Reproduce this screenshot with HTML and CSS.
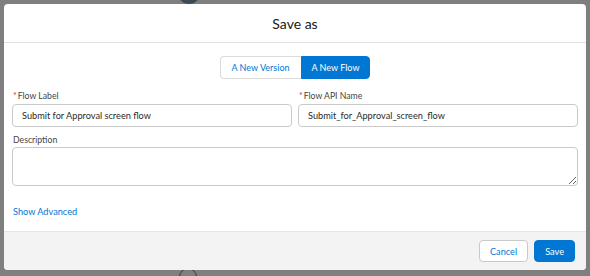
FILE: index.html
```html
<!DOCTYPE html>
<html lang="en">
<head>
    <meta charset="UTF-8">
    <meta name="viewport" content="width=device-width, initial-scale=1.0">
    <title>Save as</title>
    <link rel="stylesheet" href="styles.css">
</head>
<body>
    <div class="avatar-top"></div>
    <div class="avatar-bottom"></div>

    <div class="modal">
        <div class="modal-header">
            <h2>Save as</h2>
        </div>

        <div class="modal-body">
            <div class="toggle">
                <button type="button" class="toggle-btn">A New Version</button>
                <button type="button" class="toggle-btn active">A New Flow</button>
            </div>

            <div class="form-row">
                <div class="form-group">
                    <label for="flowLabel"><span class="required">*</span>Flow Label</label>
                    <input type="text" id="flowLabel" value="Submit for Approval screen flow">
                </div>
                <div class="form-group">
                    <label for="apiName"><span class="required">*</span>Flow API Name</label>
                    <input type="text" id="apiName" value="Submit_for_Approval_screen_flow">
                </div>
            </div>

            <div class="form-group">
                <label for="description">Description</label>
                <textarea id="description"></textarea>
            </div>

            <a href="#" class="show-advanced">Show Advanced</a>
        </div>

        <div class="modal-footer">
            <button type="button" class="cancel-btn">Cancel</button>
            <button type="button" class="save-btn">Save</button>
        </div>
    </div>
</body>
</html>
```

FILE: styles.css
```css
body {
    font-family: Lato, "Open Sans", Arial, sans-serif;
    margin: 0;
    padding: 4px;
    background-color: #7f7f7f;
    overflow: hidden;
}

/* bits of the page behind the backdrop */
.avatar-top {
    position: absolute;
    left: 178px;
    top: -18px;
    width: 22px;
    height: 22px;
    border-radius: 50%;
    background-color: #3d4a52;
}

.avatar-bottom {
    position: absolute;
    left: 179px;
    top: 268px;
    width: 16px;
    height: 16px;
    border-radius: 50%;
    border: 1px solid #3a3a3a;
}

.modal {
    position: relative;
    background-color: #fff;
    border-radius: 4px;
    height: 266px;
    display: flex;
    flex-direction: column;
    overflow: hidden;
}

.modal-header {
    height: 38px;
    border-bottom: 1px solid #e0e0e0;
    display: flex;
    align-items: center;
    justify-content: center;
}

.modal-header h2 {
    margin: 0;
    font-size: 14px;
    font-weight: normal;
    color: #181818;
}

.modal-body {
    flex: 1;
    padding: 13px 8px 0 8px;
}

.toggle {
    display: flex;
    justify-content: center;
    margin-bottom: 11px;
}

.toggle-btn {
    font-family: inherit;
    font-size: 9px;
    height: 23px;
    padding: 0 10px;
    border: 1px solid #dddbda;
    background-color: #fff;
    color: #0176d3;
    cursor: pointer;
}

.toggle-btn:first-child {
    border-radius: 4px 0 0 4px;
    border-right: none;
    padding: 0 11px;
}

.toggle-btn.active {
    background-color: #0176d3;
    border-color: #0176d3;
    color: #fff;
    border-radius: 0 4px 4px 0;
}

.form-row {
    display: flex;
    gap: 6px;
}

.form-row .form-group {
    flex: 1;
}

.form-group {
    margin-bottom: 7px;
}

label {
    display: block;
    font-size: 8.7px;
    line-height: 11px;
    color: #444;
    margin-bottom: 2px;
    padding-left: 1px;
}

.required {
    color: #c23934;
    margin-right: 1px;
}

input, textarea {
    box-sizing: border-box;
    width: 100%;
    font-family: inherit;
    font-size: 9.2px;
    color: #2b2b2b;
    border: 1px solid #c9c9c9;
    border-radius: 4px;
    padding: 0 9px;
    margin: 0;
}

input {
    height: 23px;
}

textarea {
    height: 39px;
    display: block;
    resize: vertical;
}

.show-advanced {
    display: inline-block;
    margin-top: 12px;
    margin-left: 1px;
    font-size: 9.2px;
    line-height: 14px;
    color: #0176d3;
    text-decoration: none;
}

.modal-footer {
    height: 38px;
    background-color: #f3f3f3;
    border-top: 1px solid #e5e5e5;
    display: flex;
    align-items: center;
    justify-content: flex-end;
    gap: 6px;
    padding-right: 11px;
}

.cancel-btn, .save-btn {
    font-family: inherit;
    font-size: 9.2px;
    height: 22px;
    padding: 0 10px;
    border-radius: 4px;
    cursor: pointer;
}

.cancel-btn {
    background-color: #fff;
    border: 1px solid #c9c9c9;
    color: #0176d3;
}

.save-btn {
    background-color: #0176d3;
    border: 1px solid #0176d3;
    color: #fff;
}
```
